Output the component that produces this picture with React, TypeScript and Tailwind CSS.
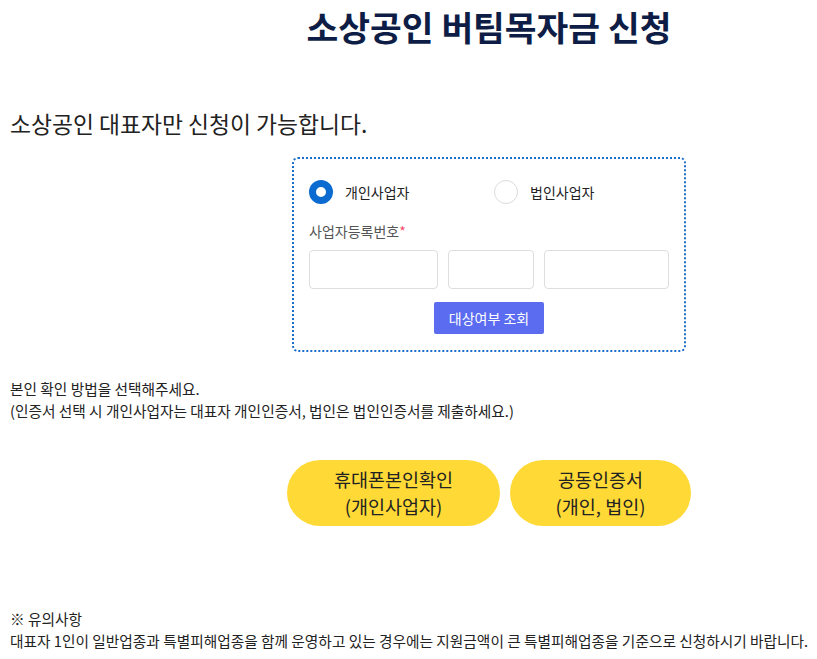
import { useState } from 'react'

const FONT = { fontFamily: '"Noto Sans CJK KR", "Noto Sans", sans-serif' }

function Radio({ checked, label, onClick }: { checked: boolean; label: string; onClick: () => void }) {
  return (
    <button type="button" onClick={onClick} className="flex items-center gap-3 text-left">
      <span
        className={
          checked
            ? 'h-6 w-6 rounded-full border-[7px] border-[#0b6bd0] bg-white'
            : 'h-6 w-6 rounded-full border border-[#dcdcdc] bg-white'
        }
      />
      <span className="text-[14px] text-[#222]">{label}</span>
    </button>
  )
}

export default function App() {
  const [type, setType] = useState<'personal' | 'corp'>('personal')

  return (
    <div className="w-[817px] overflow-hidden bg-white text-[#222]" style={FONT}>
      <div className="w-[978px]">
        <h1 className="text-center text-[34.5px] font-bold leading-[52px] text-[#0e1d45]">
          소상공인 버팀목자금 신청
        </h1>

        <p className="mt-[56px] pl-[10px] text-[22.8px] leading-[32px] text-[#222]">
          소상공인 대표자만 신청이 가능합니다.
        </p>

        <div className="mt-[17px] flex justify-center">
          <div className="w-[394px] rounded-md border-2 border-dotted border-[#1a6dc9] px-[15px] pt-[21px] pb-[16px]">
            <div className="flex">
              <div className="w-[185px]">
                <Radio checked={type === 'personal'} label="개인사업자" onClick={() => setType('personal')} />
              </div>
              <Radio checked={type === 'corp'} label="법인사업자" onClick={() => setType('corp')} />
            </div>

            <div className="mt-[17px] text-[14px] leading-[20px] text-[#555]">
              사업자등록번호<span className="text-[#f0506e]">*</span>
            </div>

            <div className="mt-[9px] flex gap-[10px]">
              <input className="h-[39px] w-[129px] rounded border border-[#dedede] px-2 outline-none" />
              <input className="h-[39px] w-[86px] rounded border border-[#dedede] px-2 outline-none" />
              <input className="h-[39px] w-[125px] rounded border border-[#dedede] px-2 outline-none" />
            </div>

            <div className="mt-[13px] flex justify-center">
              <button
                type="button"
                className="h-[32px] w-[110px] rounded-[2px] bg-[#5b6cf0] text-[14px] text-white"
              >
                대상여부 조회
              </button>
            </div>
          </div>
        </div>

        <div className="mt-[26px] pl-[10px] text-[14.7px] leading-[22px] text-[#222]">
          <p>본인 확인 방법을 선택해주세요.</p>
          <p>(인증서 선택 시 개인사업자는 대표자 개인인증서, 법인은 법인인증서를 제출하세요.)</p>
        </div>

        <div className="mt-[38px] flex justify-center gap-[10px]">
          <button
            type="button"
            className="h-[66px] w-[213px] rounded-full bg-[#ffd935] text-[18.5px] leading-[27px] text-[#222]"
          >
            휴대폰본인확인
            <br />
            (개인사업자)
          </button>
          <button
            type="button"
            className="h-[66px] w-[181px] rounded-full bg-[#ffd935] text-[18.5px] leading-[27px] text-[#222]"
          >
            공동인증서
            <br />
            (개인, 법인)
          </button>
        </div>

        <div className="mt-[82px] pl-[10px] text-[14.7px] leading-[22px] text-[#222]">
          <p>※ 유의사항</p>
          <p className="whitespace-nowrap">
            대표자 1인이 일반업종과 특별피해업종을 함께 운영하고 있는 경우에는 지원금액이 큰 특별피해업종을 기준으로
            신청하시기 바랍니다.
          </p>
        </div>
      </div>
    </div>
  )
}
